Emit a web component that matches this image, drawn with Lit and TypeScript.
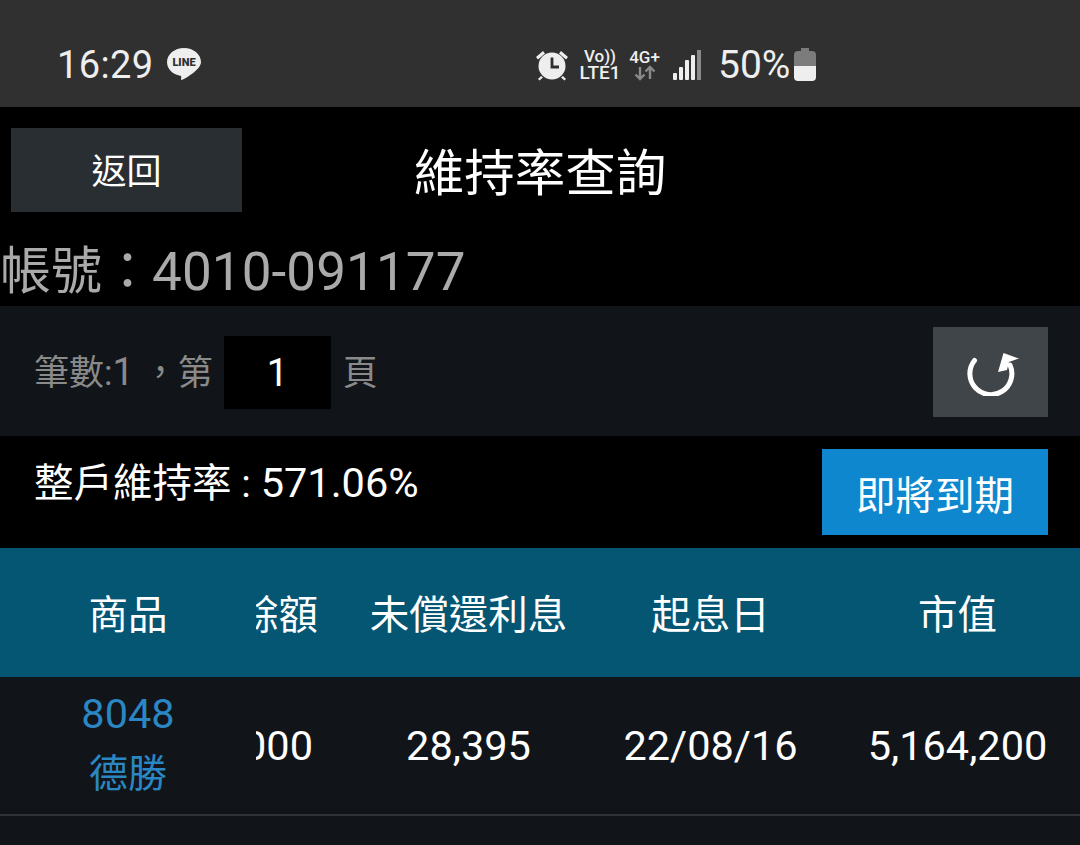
import { LitElement, html, css } from "lit";
import { customElement } from "lit/decorators.js";

@customElement("app-root")
export class AppRoot extends LitElement {
  static styles = css`
    :host { display: block; width: 1080px; height: 845px; overflow: hidden; background: #111418; color: #fff;
      font-family: Roboto, "Noto Sans CJK TC", sans-serif; }
    .status { height: 107px; background: #303030; display: flex; align-items: center; box-sizing: border-box; padding: 22px 0 0 57px; color: #eee; }
    .time { font-size: 38px; width: 110px; line-height: 44px; letter-spacing: 0.4px; }
    .line { width: 34px; height: 34px; position: relative; }
    .line svg { display: block; }
    .line span { position: absolute; left: 0; right: 0; top: 9px; text-align: center; font: 900 11px/12px Roboto; color: #303030; }
    .sicons { margin-left: 334px; display: flex; align-items: center; }
    .volte { margin-left: 10px; width: 42px; display: flex; flex-direction: column; align-items: center; font: 500 17px/16px Roboto; }
    .volte b { font-weight: 500; font-size: 19px; line-height: 17px; }
    .net { margin-left: 7px; width: 33px; display: flex; flex-direction: column; align-items: center; font: 500 17px/16px Roboto; }
    .net svg { display: block; }
    .bars { margin-left: 12px; }
    .pct { margin-left: 17px; font-size: 39px; line-height: 44px; width: 71px; }
    .batt { margin-left: 5px; }
    .titlebar { height: 131px; background: #000; position: relative; display: flex; align-items: center; justify-content: center; box-sizing: border-box; }
    .back { position: absolute; left: 11px; top: 21px; width: 231px; height: 84px; background: #292e33; display: flex; align-items: center; justify-content: center; font-size: 35px; padding-bottom: 3px; box-sizing: border-box; }
    .title { font-size: 50.5px; line-height: 60px; margin-top: 3px; }
    .account { height: 68px; background: #000; color: #aaa; font-size: 51px; line-height: 68px; white-space: nowrap; display: flex; }
    .account .num { font-size: 53px; margin-left: -1px; letter-spacing: 0.1px; }
    .pager { height: 130px; box-sizing: border-box; padding: 2px 32px 0 34px; background: #111418; display: flex; align-items: center; color: #8a8a8a; font-size: 35px; }
    .pager .txt { margin-top: -6px; }
    .pager .n { font-size: 38px; }
    .pager .gap { margin-left: 9px; }
    .pg-input { width: 107px; height: 73px; background: #000; color: #fff; margin: 0 12px 0 11px; display: flex; align-items: center; justify-content: center; font-size: 38px; padding-top: 2px; box-sizing: border-box; }
    .pager .ref { margin-left: auto; width: 115px; height: 90px; background: #404549; display: flex; align-items: center; justify-content: center; }
    .ref svg { margin-left: 2px; }
    .summary { height: 112px; background: #000; display: flex; padding: 0 32px 0 34px; }
    .sum-text { font-size: 39.5px; line-height: 46px; margin-top: 24px; white-space: nowrap; }
    .sum-text .n { font-size: 41.5px; }
    .expire { margin-left: auto; margin-top: 13px; width: 226px; height: 86px; background: #0f87cf; display: flex; align-items: center; justify-content: center; font-size: 39.5px; }
    .row { display: grid; grid-template-columns: 256px 89px 247px 237px 257px; }
    .head { height: 129px; background: #055673; font-size: 39.5px; }
    .body { height: 137px; background: #111418; border-bottom: 2px solid #303336; }
    .cell { display: flex; align-items: center; justify-content: center; white-space: nowrap; overflow: hidden; }
    .head .cell { padding-bottom: 3px; }
    .body .cell { font-size: 41.5px; }
    .first { flex-direction: column; color: #2a87c4; line-height: 60px; padding-bottom: 4px; }
    .first .zh { font-size: 39px; }
    .clip { justify-content: flex-end; padding-right: 27px; box-sizing: border-box; }
    .clip.v { padding-right: 32px; }
  `;

  render() {
    return html`
      <div class="status">
        <span class="time">16:29</span>
        <span class="line">
          <svg width="34" height="34" viewBox="0 0 34 34"><path fill="#eee" d="M17 0C7.6 0 0 6.3 0 14c0 6.9 5.6 12.5 13.300 13.800 1.200.3 1 1.200.8 2.600-.1.800 0 1.900 1.200 1.400C17 31 30 24 33 17.500c.7-1.300 1-2.300 1-3.500C34 6.300 26.400 0 17 0z"/></svg>
          <span>LINE</span>
        </span>
        <span class="sicons">
          <svg width="34" height="34" viewBox="0 0 34 34"><g fill="#eee"><circle cx="17" cy="18" r="13.500"/><path d="M1 9l7-6 2 2.500-7 6zM33 9l-7-6-2 2.500 7 6zM6 28l-3 3 1.500 1.500 3.500-3zM28 28l3 3-1.500 1.500-3.500-3z"/></g><path d="M17 9.500V19h7" fill="none" stroke="#303030" stroke-width="2.800"/></svg>
          <span class="volte"><span>Vo))</span><b>LTE1</b></span>
          <span class="net">4G+<svg width="24" height="16" viewBox="0 0 24 16"><path d="M7 2v12M2.500 9.500L7 14 11.500 9.500M17 14V2M12.500 6.500L17 2 21.500 6.500" fill="none" stroke="#8a8a8a" stroke-width="2.400"/></svg></span>
          <svg class="bars" width="28" height="30" viewBox="0 0 28 30"><rect x="0" y="23" width="4" height="7" rx="1" fill="#eee"/><rect x="6" y="17" width="4" height="13" rx="1" fill="#eee"/><rect x="12" y="10" width="4" height="20" rx="1" fill="#eee"/><rect x="18" y="5" width="4" height="25" rx="1" fill="#eee"/><rect x="24" y="0" width="4" height="30" fill="#8a8a8a"/></svg>
          <span class="pct">50%</span>
          <svg class="batt" width="22" height="33" viewBox="0 0 22 33"><path fill="#7c7c7c" d="M7 0h8v3h3a4 4 0 0 1 4 4v12H0V7a4 4 0 0 1 4-4h3z"/><path fill="#eee" d="M0 18h22v11a4 4 0 0 1-4 4H4a4 4 0 0 1-4-4z"/></svg>
        </span>
      </div>
      <div class="titlebar">
        <div class="back">返回</div>
        <div class="title">維持率查詢</div>
      </div>
      <div class="account"><span>帳號：</span><span class="num">4010-091177</span></div>
      <div class="pager">
        <span class="txt">筆數:<span class="n">1</span><span class="gap">，第</span></span>
        <span class="pg-input">1</span>
        <span class="txt">頁</span>
        <div class="ref">
          <svg width="54" height="48" viewBox="0 0 54 48"><path d="M9.500 12.500A21 21 0 1 0 45 17" fill="none" stroke="#fff" stroke-width="5" stroke-linecap="round"/><path fill="#fff" d="M33 24l5.500-19L54 10.500 44 14l-2 8z"/></svg>
        </div>
      </div>
      <div class="summary">
        <span class="sum-text">整戶維持率 : <span class="n">571.06%</span></span>
        <div class="expire">即將到期</div>
      </div>
      <div class="row head">
        <div class="cell">商品</div>
        <div class="cell clip">餘額</div>
        <div class="cell">未償還利息</div>
        <div class="cell">起息日</div>
        <div class="cell">市值</div>
      </div>
      <div class="row body">
        <div class="cell first"><span>8048</span><span class="zh">德勝</span></div>
        <div class="cell clip v">,000</div>
        <div class="cell">28,395</div>
        <div class="cell">22/08/16</div>
        <div class="cell">5,164,200</div>
      </div>
    `;
  }
}
